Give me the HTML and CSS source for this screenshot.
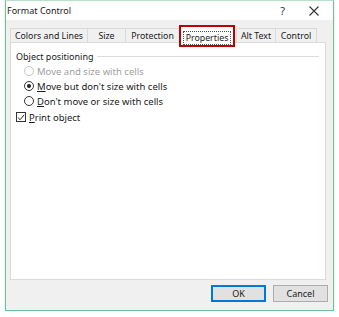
FILE: index.html
```html
<!DOCTYPE html>
<html lang="en">
<head>
    <meta charset="UTF-8">
    <title>Format Control</title>
    <link rel="stylesheet" href="styles.css">
</head>
<body>
    <div class="dialog">
        <div class="titlebar">
            <span class="title">Format Control</span>
            <span class="help">?</span>
            <span class="close">
                <svg width="10" height="10" viewBox="0 0 10 10"><path d="M0.5 0.5 L9.5 9.5 M9.5 0.5 L0.5 9.5" stroke="#333" stroke-width="1.1"/></svg>
            </span>
        </div>
        <div class="tabs">
            <span class="tab t1">Colors and Lines</span>
            <span class="tab t2">Size</span>
            <span class="tab t3">Protection</span>
            <span class="tab active"><span class="focus">Properties</span></span>
            <span class="tab t5">Alt Text</span>
            <span class="tab t6">Control</span>
        </div>
        <div class="panel">
            <div class="group-head">
                <span>Object positioning</span>
                <span class="rule"></span>
            </div>
            <div class="option disabled">
                <span class="radio"></span>
                <span>Move and size with cells</span>
            </div>
            <div class="option">
                <span class="radio checked"></span>
                <span><u>M</u>ove but don't size with cells</span>
            </div>
            <div class="option">
                <span class="radio"></span>
                <span><u>D</u>on't move or size with cells</span>
            </div>
            <div class="option check-row">
                <span class="check">
                    <svg width="9" height="9" viewBox="0 0 9 9"><path d="M1 4.5 L3.5 7 L8 1.5" fill="none" stroke="#222" stroke-width="1.1"/></svg>
                </span>
                <span><u>P</u>rint object</span>
            </div>
        </div>
        <div class="footer">
            <button class="btn ok">OK</button>
            <button class="btn">Cancel</button>
        </div>
    </div>
</body>
</html>
```

FILE: styles.css
```css
body {
    margin: 0;
    background-color: #ffffff;
    font-family: "Noto Sans", Arial, sans-serif;
    font-size: 9.5px;
    color: #1a1a1a;
}
.dialog {
    margin-left: 5px;
    width: 329px;
    height: 311px;
    border: 1px solid #6cc197;
    border-top-color: #b9e0cb;
    background-color: #f0f0f0;
    box-shadow: 0 2px 2px #d8d8d8;
    box-sizing: border-box;
    display: flex;
    flex-direction: column;
}
.titlebar {
    height: 19px;
    background-color: #ffffff;
    display: flex;
    align-items: center;
    padding-left: 1px;
}
.title {
    flex: 1;
    font-size: 9px;
}
.help {
    font-size: 11px;
    color: #333;
    margin-right: 24px;
}
.close {
    display: flex;
    margin-right: 14px;
}
.tabs {
    display: flex;
    align-items: flex-end;
    height: 22px;
    padding-left: 4px;
    font-size: 8.8px;
}
.tab {
    height: 14px;
    display: flex;
    align-items: center;
    justify-content: center;
    flex-shrink: 0;
    white-space: nowrap;
    border: 1px solid #dadada;
    border-bottom: none;
    margin-right: -1px;
    background-color: #f0f0f0;
    box-sizing: border-box;
    padding-top: 1px;
}
.t1 { width: 78px; }
.t2 { width: 39px; }
.t3 { width: 55px; }
.tab.active {
    height: 22px;
    background-color: #ffffff;
    border: 2px solid #c00000;
    margin: 0 1px -5px 0;
    width: 56px;
    position: relative;
    align-items: flex-start;
    padding-top: 4px;
}
.focus {
    border: 1px dotted #555;
    padding: 1px 2px;
    line-height: 10px;
}
.t5 { width: 40px; }
.t6 { width: 42px; }
.panel {
    height: 238px;
    margin: 0 7px 0 4px;
    background-color: #ffffff;
    border: 1px solid #dadada;
    padding: 6px 0 0 5px;
    box-sizing: border-box;
}
.group-head {
    display: flex;
    align-items: center;
    height: 14px;
    margin-right: 6px;
    font-size: 9px;
}
.rule {
    flex: 1;
    border-top: 1px solid #dcdcdc;
    margin-left: 4px;
}
.option {
    display: flex;
    align-items: center;
    height: 14px;
    margin-top: 1px;
    padding-left: 8px;
}
.option.disabled {
    color: #a0a0a0;
}
.radio {
    width: 10px;
    height: 10px;
    border: 1px solid #333;
    border-radius: 50%;
    box-sizing: border-box;
    margin-right: 3px;
    display: flex;
    align-items: center;
    justify-content: center;
}
.disabled .radio {
    border-color: #c4c4c4;
}
.radio.checked::after {
    content: "";
    width: 4px;
    height: 4px;
    border-radius: 50%;
    background-color: #222;
}
.check-row {
    margin-top: 2px;
    padding-left: 0;
}
.check {
    width: 10px;
    height: 10px;
    border: 1px solid #333;
    box-sizing: border-box;
    margin-right: 3px;
    display: flex;
    align-items: center;
    justify-content: center;
}
.footer {
    display: flex;
    justify-content: flex-end;
    padding: 5px 5px 0 0;
    gap: 7px;
}
.btn {
    width: 55px;
    height: 17px;
    font-family: "Noto Sans", Arial, sans-serif;
    font-size: 9px;
    color: #1a1a1a;
    background-color: #e1e1e1;
    border: 1px solid #adadad;
    padding: 0;
}
.btn.ok {
    border: 2px solid #0078d7;
}
```
